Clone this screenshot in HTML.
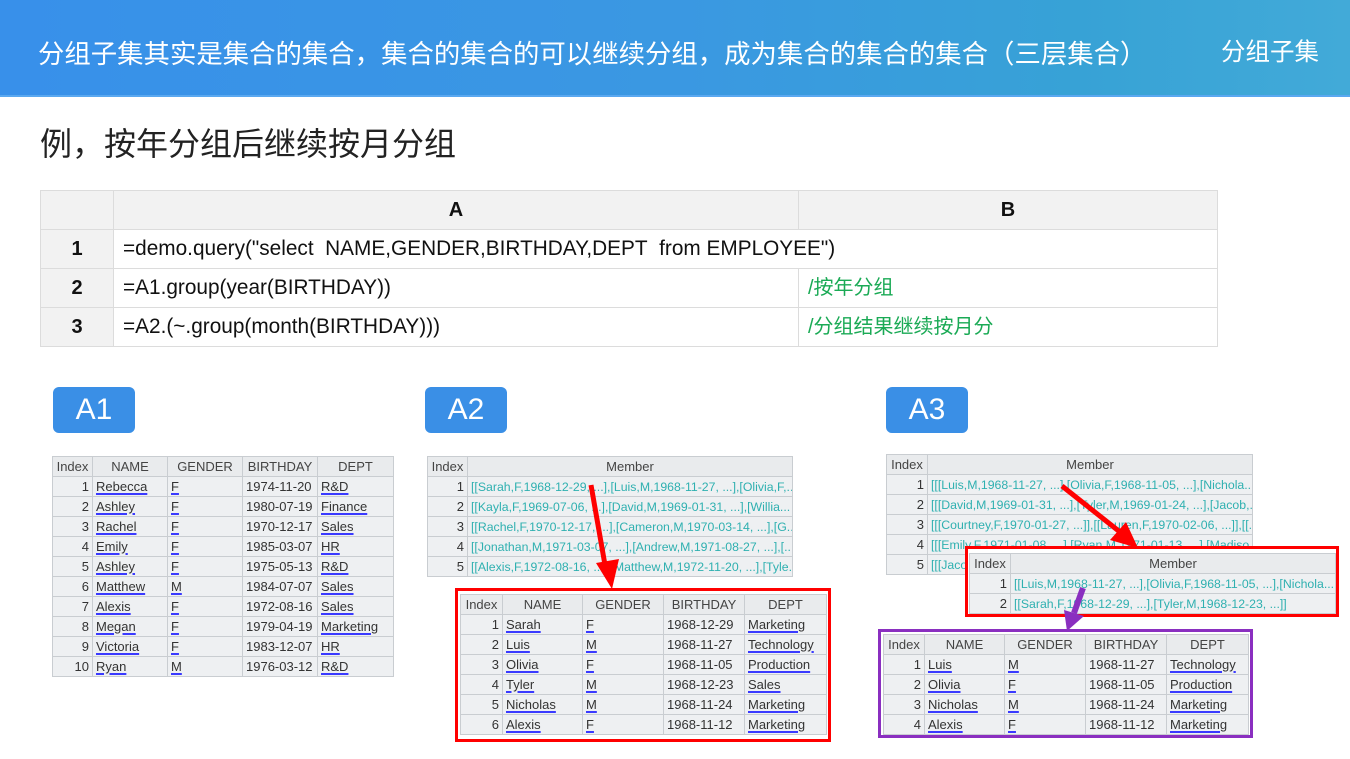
<!DOCTYPE html>
<html><head><meta charset="utf-8">
<style>
*{margin:0;padding:0;box-sizing:border-box}
body{width:1350px;height:759px;overflow:hidden;background:#fff;position:relative;font-family:"Liberation Sans","Noto Sans CJK SC",sans-serif}
.hdr{position:absolute;left:0;top:0;width:1350px;height:97px;background:linear-gradient(90deg,#3890ea 0%,#3a98e2 50%,#37a2d6 80%,#42aad8 100%);border-bottom:2px solid #5aa8f0}
.hdr .t{position:absolute;left:38px;top:32px;font-size:26.4px;color:#fff;white-space:nowrap}
.hdr .r{position:absolute;left:1221px;top:33px;font-size:24.5px;color:#fff}
.sub{position:absolute;left:40px;top:119px;font-size:32px;color:#222}
table{border-collapse:collapse;table-layout:fixed;position:absolute}
.code td{border:1px solid #dcdcdc;font-size:20.8px;height:39px;color:#111;white-space:nowrap}
.code .g{background:#f2f2f2;text-align:center;font-weight:bold;font-size:20px}
.code td.c{padding-left:9px}
.code .cm{color:#1aaa55;padding-left:9px;font-size:20px;line-height:20px}
.badge{position:absolute;width:82px;height:46px;background:#3a8fe6;border-radius:6px;color:#fff;font-size:30px;text-align:center;line-height:46px}
.s td{border:1px solid #c9cdd1;background:#eef0f2;font-size:13px;height:20px;color:#333;padding:0 3px;white-space:nowrap;overflow:hidden}
.s tr:first-child td{text-align:center;color:#444;background:#e9ebed}
.s td.i{text-align:right}
.s u{text-decoration-color:#3a3aff;text-decoration-thickness:2px;text-underline-offset:2px}
.s td.m{color:#2fb0b0;font-size:12.3px}
.box{position:absolute;border:3px solid #f00}
</style></head><body>
<div class="hdr"><div class="t">分组子集其实是集合的集合，集合的集合的可以继续分组，成为集合的集合的集合（三层集合）</div><div class="r">分组子集</div></div>
<div class="sub">例，按年分组后继续按月分组</div>

<table class="code" style="left:40px;top:190px;width:1177px">
<col style="width:73px"><col style="width:685px"><col style="width:419px">
<tr><td class="g"></td><td class="g">A</td><td class="g">B</td></tr>
<tr><td class="g">1</td><td class="c" colspan="2">=demo.query("select&nbsp; NAME,GENDER,BIRTHDAY,DEPT&nbsp; from EMPLOYEE")</td></tr>
<tr><td class="g">2</td><td class="c">=A1.group(year(BIRTHDAY))</td><td class="cm">/按年分组</td></tr>
<tr><td class="g">3</td><td class="c">=A2.(~.group(month(BIRTHDAY)))</td><td class="cm">/分组结果继续按月分</td></tr>
</table>

<div class="badge" style="left:53px;top:387px">A1</div>
<div class="badge" style="left:425px;top:387px">A2</div>
<div class="badge" style="left:886px;top:387px">A3</div>

<table class="s" style="left:52px;top:456px;width:341px">
<col style="width:40px"><col style="width:75px"><col style="width:75px"><col style="width:75px"><col style="width:76px">
<tr><td>Index</td><td>NAME</td><td>GENDER</td><td>BIRTHDAY</td><td>DEPT</td></tr>
<tr><td class="i">1</td><td><u>Rebecca</u></td><td><u>F</u></td><td>1974-11-20</td><td><u>R&amp;D</u></td></tr>
<tr><td class="i">2</td><td><u>Ashley</u></td><td><u>F</u></td><td>1980-07-19</td><td><u>Finance</u></td></tr>
<tr><td class="i">3</td><td><u>Rachel</u></td><td><u>F</u></td><td>1970-12-17</td><td><u>Sales</u></td></tr>
<tr><td class="i">4</td><td><u>Emily</u></td><td><u>F</u></td><td>1985-03-07</td><td><u>HR</u></td></tr>
<tr><td class="i">5</td><td><u>Ashley</u></td><td><u>F</u></td><td>1975-05-13</td><td><u>R&amp;D</u></td></tr>
<tr><td class="i">6</td><td><u>Matthew</u></td><td><u>M</u></td><td>1984-07-07</td><td><u>Sales</u></td></tr>
<tr><td class="i">7</td><td><u>Alexis</u></td><td><u>F</u></td><td>1972-08-16</td><td><u>Sales</u></td></tr>
<tr><td class="i">8</td><td><u>Megan</u></td><td><u>F</u></td><td>1979-04-19</td><td><u>Marketing</u></td></tr>
<tr><td class="i">9</td><td><u>Victoria</u></td><td><u>F</u></td><td>1983-12-07</td><td><u>HR</u></td></tr>
<tr><td class="i">10</td><td><u>Ryan</u></td><td><u>M</u></td><td>1976-03-12</td><td><u>R&amp;D</u></td></tr>
</table>

<table class="s" style="left:427px;top:456px;width:365px">
<col style="width:40px"><col style="width:325px">
<tr><td>Index</td><td>Member</td></tr>
<tr><td class="i">1</td><td class="m">[[Sarah,F,1968-12-29, ...],[Luis,M,1968-11-27, ...],[Olivia,F,...</td></tr>
<tr><td class="i">2</td><td class="m">[[Kayla,F,1969-07-06, ...],[David,M,1969-01-31, ...],[Willia...</td></tr>
<tr><td class="i">3</td><td class="m">[[Rachel,F,1970-12-17, ...],[Cameron,M,1970-03-14, ...],[G...</td></tr>
<tr><td class="i">4</td><td class="m">[[Jonathan,M,1971-03-07, ...],[Andrew,M,1971-08-27, ...],[...</td></tr>
<tr><td class="i">5</td><td class="m">[[Alexis,F,1972-08-16, ...],[Matthew,M,1972-11-20, ...],[Tyle...</td></tr>
</table>

<div class="box" style="left:455px;top:588px;width:376px;height:154px"></div>
<table class="s" style="left:460px;top:594px;width:366px">
<col style="width:42px"><col style="width:80px"><col style="width:81px"><col style="width:81px"><col style="width:82px">
<tr><td>Index</td><td>NAME</td><td>GENDER</td><td>BIRTHDAY</td><td>DEPT</td></tr>
<tr><td class="i">1</td><td><u>Sarah</u></td><td><u>F</u></td><td>1968-12-29</td><td><u>Marketing</u></td></tr>
<tr><td class="i">2</td><td><u>Luis</u></td><td><u>M</u></td><td>1968-11-27</td><td><u>Technology</u></td></tr>
<tr><td class="i">3</td><td><u>Olivia</u></td><td><u>F</u></td><td>1968-11-05</td><td><u>Production</u></td></tr>
<tr><td class="i">4</td><td><u>Tyler</u></td><td><u>M</u></td><td>1968-12-23</td><td><u>Sales</u></td></tr>
<tr><td class="i">5</td><td><u>Nicholas</u></td><td><u>M</u></td><td>1968-11-24</td><td><u>Marketing</u></td></tr>
<tr><td class="i">6</td><td><u>Alexis</u></td><td><u>F</u></td><td>1968-11-12</td><td><u>Marketing</u></td></tr>
</table>

<table class="s" style="left:886px;top:454px;width:366px">
<col style="width:41px"><col style="width:325px">
<tr><td>Index</td><td>Member</td></tr>
<tr><td class="i">1</td><td class="m">[[[Luis,M,1968-11-27, ...],[Olivia,F,1968-11-05, ...],[Nichola...</td></tr>
<tr><td class="i">2</td><td class="m">[[[David,M,1969-01-31, ...],[Tyler,M,1969-01-24, ...],[Jacob,...</td></tr>
<tr><td class="i">3</td><td class="m">[[[Courtney,F,1970-01-27, ...]],[[Lauren,F,1970-02-06, ...]],[[...</td></tr>
<tr><td class="i">4</td><td class="m">[[[Emily,F,1971-01-08, ...],[Ryan,M,1971-01-13, ...],[Madiso...</td></tr>
<tr><td class="i">5</td><td class="m">[[[Jacob,M,1972-01-10, ...]]</td></tr>
</table>

<div class="box" style="left:965px;top:546px;width:374px;height:71px;background:#fff"></div>
<table class="s" style="left:969px;top:553px;width:366px">
<col style="width:41px"><col style="width:325px">
<tr><td>Index</td><td>Member</td></tr>
<tr><td class="i">1</td><td class="m">[[Luis,M,1968-11-27, ...],[Olivia,F,1968-11-05, ...],[Nichola...</td></tr>
<tr><td class="i">2</td><td class="m">[[Sarah,F,1968-12-29, ...],[Tyler,M,1968-12-23, ...]]</td></tr>
</table>

<div class="box" style="left:878px;top:629px;width:375px;height:109px;border-color:#8a2fc0"></div>
<table class="s" style="left:883px;top:634px;width:365px">
<col style="width:41px"><col style="width:80px"><col style="width:81px"><col style="width:81px"><col style="width:82px">
<tr><td>Index</td><td>NAME</td><td>GENDER</td><td>BIRTHDAY</td><td>DEPT</td></tr>
<tr><td class="i">1</td><td><u>Luis</u></td><td><u>M</u></td><td>1968-11-27</td><td><u>Technology</u></td></tr>
<tr><td class="i">2</td><td><u>Olivia</u></td><td><u>F</u></td><td>1968-11-05</td><td><u>Production</u></td></tr>
<tr><td class="i">3</td><td><u>Nicholas</u></td><td><u>M</u></td><td>1968-11-24</td><td><u>Marketing</u></td></tr>
<tr><td class="i">4</td><td><u>Alexis</u></td><td><u>F</u></td><td>1968-11-12</td><td><u>Marketing</u></td></tr>
</table>

<svg style="position:absolute;left:0;top:0" width="1350" height="759">
<line x1="591" y1="485" x2="605" y2="565" stroke="#f00" stroke-width="5"/>
<polygon points="596,563 619,559 612,589" fill="#f00"/>
<line x1="1062" y1="486" x2="1120" y2="532" stroke="#f00" stroke-width="5"/>
<polygon points="1110,540 1126,522 1138,548" fill="#f00"/>
<line x1="1083" y1="588" x2="1074" y2="613" stroke="#8a2fc0" stroke-width="6"/>
<polygon points="1064,610 1084,616 1067,631" fill="#8a2fc0"/>
</svg>
</body></html>
